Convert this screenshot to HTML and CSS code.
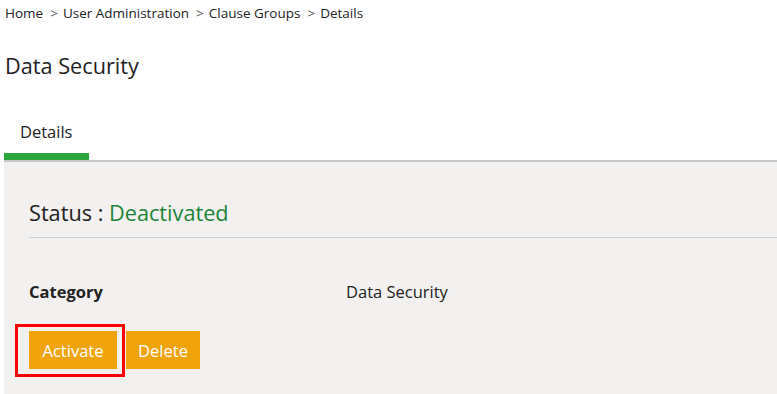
FILE: index.html
```html
<!DOCTYPE html>
<html>
<head>
<meta charset="utf-8">
<link rel="stylesheet" href="styles.css">
</head>
<body>
<nav class="crumbs">
  <span>Home</span><span class="sep">&gt;</span><span>User Administration</span><span class="sep">&gt;</span><span>Clause Groups</span><span class="sep">&gt;</span><span>Details</span>
</nav>
<h1 class="title">Data Security</h1>
<div class="tabs">
  <div class="tab active">Details</div>
</div>
<section class="panel">
  <h2 class="status">Status : <span class="state">Deactivated</span></h2>
  <div class="row">
    <div class="label">Category</div>
    <div class="value">Data Security</div>
  </div>
  <div class="actions">
    <button class="btn btn-activate">Activate</button>
    <button class="btn btn-delete">Delete</button>
    <div class="highlight"></div>
  </div>
</section>
</body>
</html>
```

FILE: styles.css
```css
html, body {
  margin: 0;
  padding: 0;
  background: #ffffff;
  font-family: "Open Sans", "Noto Sans", sans-serif;
  color: #222;
  overflow: hidden;
}
.crumbs {
  padding: 4px 0 0 5px;
  font-size: 13.5px;
  line-height: 18px;
  color: #222;
  display: flex;
}
.crumbs .sep {
  color: #555;
  margin: 0 5px 0 7px;
}
.title {
  margin: 0;
  padding: 29px 0 0 5px;
  font-size: 21.7px;
  font-weight: 400;
  line-height: 30px;
}
.tabs {
  margin: 38px 0 0 4px;
  border-bottom: 2px solid #c8c8c8;
  display: flex;
}
.tab {
  width: 85px;
  box-sizing: border-box;
  padding: 1px 0 9px 16px;
  font-size: 16.5px;
  line-height: 24px;
  border-bottom: 7px solid #2ba63a;
}
.panel {
  margin-left: 4px;
  background: #f2f1ef;
  height: 240px;
  padding: 37px 0 0 25px;
  box-sizing: border-box;
}
.status {
  margin: 0;
  font-size: 21.7px;
  font-weight: 400;
  line-height: 28px;
  padding-bottom: 10px;
  border-bottom: 1px solid #cfcfcf;
}
.state {
  color: #1c8538;
}
.row {
  display: flex;
  margin-top: 42px;
  font-size: 16.5px;
  line-height: 24px;
}
.label {
  width: 317px;
  font-weight: 700;
}
.actions {
  position: relative;
  display: flex;
  gap: 9px;
  margin-top: 27px;
}
.btn {
  font-family: inherit;
  border: 0;
  background: #f0a30a;
  color: #fff;
  font-size: 16.5px;
  height: 38px;
  padding: 0;
  text-align: center;
  cursor: pointer;
}
.btn-activate {
  width: 88px;
}
.btn-delete {
  width: 74px;
}
.highlight {
  position: absolute;
  left: -14px;
  top: -7px;
  width: 110px;
  height: 53px;
  box-sizing: border-box;
  border: 3px solid #ff0000;
}
```
